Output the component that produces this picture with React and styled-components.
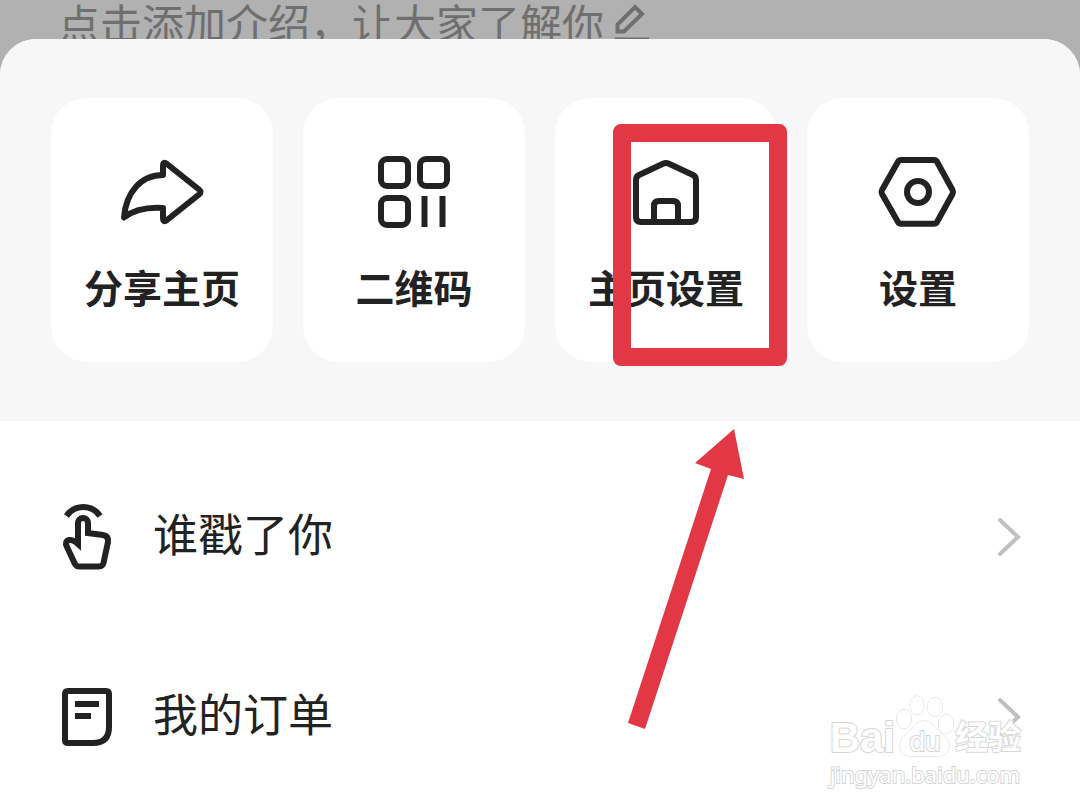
import React, { Fragment } from 'react';
import styled, { createGlobalStyle } from 'styled-components';

const actions = [
  { key: 'share', label: '分享主页' },
  { key: 'qrcode', label: '二维码' },
  { key: 'home', label: '主页设置', marked: true },
  { key: 'settings', label: '设置' },
];

const entries = [
  { key: 'poke', label: '谁戳了你' },
  { key: 'order', label: '我的订单' },
];

const icons = {
  share: (
    <path d="M46 28V19Q46 14 50 17L82 42.5Q85 45 82 47.5L50 73Q46 76 46 71V61C30 60 18 62 7 70.5C9 45 24 28 46 28Z" />
  ),
  qrcode: (
    <Fragment>
      <rect x="12" y="12" width="27" height="27" rx="6" />
      <rect x="51" y="12" width="27" height="27" rx="6" />
      <rect x="12" y="51" width="27" height="27" rx="6" />
      <path d="M55.5 49V80M73.5 49V80" />
    </Fragment>
  ),
  home: (
    <Fragment>
      <path d="M15 33Q15 29.5 18 28L42 16.8Q45 15.4 48 16.8L72 28Q75 29.5 75 33V70Q75 75 70 75H20Q15 75 15 70Z" />
      <path d="M33 75V59Q33 54 38 54H52Q57 54 57 59V75" />
    </Fragment>
  ),
  settings: (
    <Fragment>
      <path d="M28 13H61Q63 13 64 14.7L79.5 43Q80.5 45 79.5 47L64 75Q63 76.7 61 76.7H28Q26 76.7 25 75L9 47Q8 45 9 43L25 14.7Q26 13 28 13Z" />
      <circle cx="45" cy="45" r="11" />
    </Fragment>
  ),
  poke: (
    <Fragment>
      <path d="M6.5 15A20 20 0 0 1 40 15" />
      <path d="M18 43V22a5 5 0 0 1 10 0V32L43 34Q49 35 48 41L43.5 62Q42.5 65.5 39 65.5H19Q16.5 65.5 15 63L7 46Q4 40 9.5 39Q13 38.5 18 43Z" />
    </Fragment>
  ),
  order: (
    <Fragment>
      <path d="M8 10H46Q49 10 49 13V46Q49 62 33 62H8Q5 62 5 59V13Q5 10 8 10Z" />
      <path d="M15 23H39M15 35H31" />
    </Fragment>
  ),
};

function App() {
  return (
    <Fragment>
      <GlobalStyle />
      <Page>
        <Backdrop>
          <Intro>点击添加介绍，让大家了解你</Intro>
          <PencilIcon viewBox="0 0 40 42">
            <path d="M23 7L30 14L12 31.5H5.5V24.5Z" />
            <path d="M3 39.5H37" />
          </PencilIcon>
        </Backdrop>
        <Sheet>
          <Actions>
            {actions.map(item => (
              <ActionItem key={item.key}>
                <ActionButton type="button">
                  <ActionIcon viewBox="0 0 90 90">{icons[item.key]}</ActionIcon>
                  <ActionLabel>{item.label}</ActionLabel>
                </ActionButton>
                {item.marked && (
                  <Fragment>
                    <Marker />
                    <Arrow viewBox="0 0 116 300">
                      <path d="M106 0L116 50L100 46L17 300L0 294L83 40L67 34Z" />
                    </Arrow>
                  </Fragment>
                )}
              </ActionItem>
            ))}
          </Actions>
          <List>
            {entries.map(item => (
              <Row key={item.key} type="button">
                <RowIcon viewBox="0 0 54 72">{icons[item.key]}</RowIcon>
                <RowLabel>{item.label}</RowLabel>
                <Chevron viewBox="0 0 24 42">
                  <path d="M3 4L21 21L3 38" />
                </Chevron>
              </Row>
            ))}
          </List>
        </Sheet>
        <Watermark>
          <Brand>
            <BrandLatin>Bai</BrandLatin>
            <Paw viewBox="0 0 60 64">
              <ellipse cx="9" cy="25" rx="7.5" ry="9.5" />
              <ellipse cx="22" cy="11.5" rx="7" ry="9.5" />
              <ellipse cx="40" cy="13" rx="7.5" ry="9.5" />
              <ellipse cx="51" cy="30" rx="7.5" ry="9.5" />
              <path d="M29 27C37 27 40 34 46 39C53 44 56 50 53 57C50 63 42 63 30 62C18 63 9 63 6 57C3 50 6 44 13 39C19 34 21 27 29 27Z" />
              <text x="30" y="57" textAnchor="middle">du</text>
            </Paw>
            <BrandHan>经验</BrandHan>
          </Brand>
          <Site>jingyan.baidu.com</Site>
        </Watermark>
      </Page>
    </Fragment>
  );
}

export default App;

const GlobalStyle = createGlobalStyle`
  body {
    margin: 0;
    background-color: #fff;
    font-family: 'Liberation Sans', 'Noto Sans CJK SC', sans-serif;
    color: #222;
  }
  button {
    margin: 0;
    border: 0;
    font-family: inherit;
    color: inherit;
    cursor: pointer;
  }
`;

const Page = styled.main`
  position: relative;
  min-height: 100vh;
  overflow: hidden;
`;

const Backdrop = styled.header`
  display: flex;
  align-items: flex-start;
  gap: 8px;
  height: 84px;
  padding-left: 58px;
  background-color: #b1b1b1;
  color: #6f6f6f;
`;

const Intro = styled.span`
  font-size: 42px;
  line-height: 52px;
  white-space: nowrap;
`;

const PencilIcon = styled.svg`
  width: 40px;
  height: 42px;
  fill: none;
  stroke: #6f6f6f;
  stroke-width: 4;
`;

const Sheet = styled.section`
  position: relative;
  margin-top: -45px;
  border-radius: 36px 36px 0 0;
  background-color: #fff;
`;

const Actions = styled.div`
  display: grid;
  grid-template-columns: repeat(4, 1fr);
  gap: 30px;
  padding: 59px 51px;
  border-radius: 36px 36px 0 0;
  background-color: #f7f7f7;
`;

const ActionItem = styled.div`
  position: relative;
`;

const ActionButton = styled.button`
  display: flex;
  flex-direction: column;
  align-items: center;
  gap: 23px;
  width: 100%;
  padding: 49px 0 42px;
  border-radius: 36px;
  background-color: #fff;
`;

const ActionIcon = styled.svg`
  width: 90px;
  height: 90px;
  fill: none;
  stroke: #222;
  stroke-width: 6;
  stroke-linejoin: round;
`;

const ActionLabel = styled.span`
  font-size: 39px;
  line-height: 60px;
  font-weight: bold;
  white-space: nowrap;
`;

const Marker = styled.div`
  position: absolute;
  top: 26px;
  left: 58px;
  z-index: 1;
  box-sizing: border-box;
  width: 174px;
  height: 242px;
  border: 18px solid #e23845;
  border-radius: 8px;
  pointer-events: none;
`;

const Arrow = styled.svg`
  position: absolute;
  top: 331px;
  left: 73px;
  z-index: 1;
  width: 116px;
  height: 300px;
  fill: #e23845;
  pointer-events: none;
`;

const List = styled.div`
  padding-top: 26px;
`;

const Row = styled.button`
  display: flex;
  align-items: center;
  width: 100%;
  height: 180px;
  padding: 0 59px 0 60px;
  background-color: transparent;
  text-align: left;
`;

const RowIcon = styled.svg`
  width: 54px;
  height: 72px;
  fill: none;
  stroke: #222;
  stroke-width: 6;
`;

const RowLabel = styled.span`
  flex: 1;
  padding-left: 39px;
  font-size: 45px;
  line-height: 60px;
`;

const Chevron = styled.svg`
  width: 24px;
  height: 42px;
  fill: none;
  stroke: #c0c0c0;
  stroke-width: 4;
  stroke-linecap: round;
`;

const Watermark = styled.div`
  position: absolute;
  right: 59px;
  bottom: 22px;
  z-index: 2;
  color: #fff;
  paint-order: stroke fill;
  -webkit-text-stroke: 2px #d6d6d6;
  pointer-events: none;
`;

const Brand = styled.div`
  display: flex;
  align-items: flex-end;
`;

const BrandLatin = styled.span`
  font-size: 42px;
  line-height: 44px;
  font-weight: bold;
`;

const Paw = styled.svg`
  width: 60px;
  height: 64px;
  margin-bottom: 2px;
  fill: #fff;
  stroke: #d6d6d6;
  stroke-width: 1;
  text {
    font-size: 28px;
    stroke-width: 2;
  }
`;

const BrandHan = styled.span`
  font-size: 33px;
  line-height: 44px;
  font-weight: bold;
`;

const Site = styled.div`
  font-family: 'Noto Sans', sans-serif;
  font-size: 22px;
  line-height: 28px;
`;
